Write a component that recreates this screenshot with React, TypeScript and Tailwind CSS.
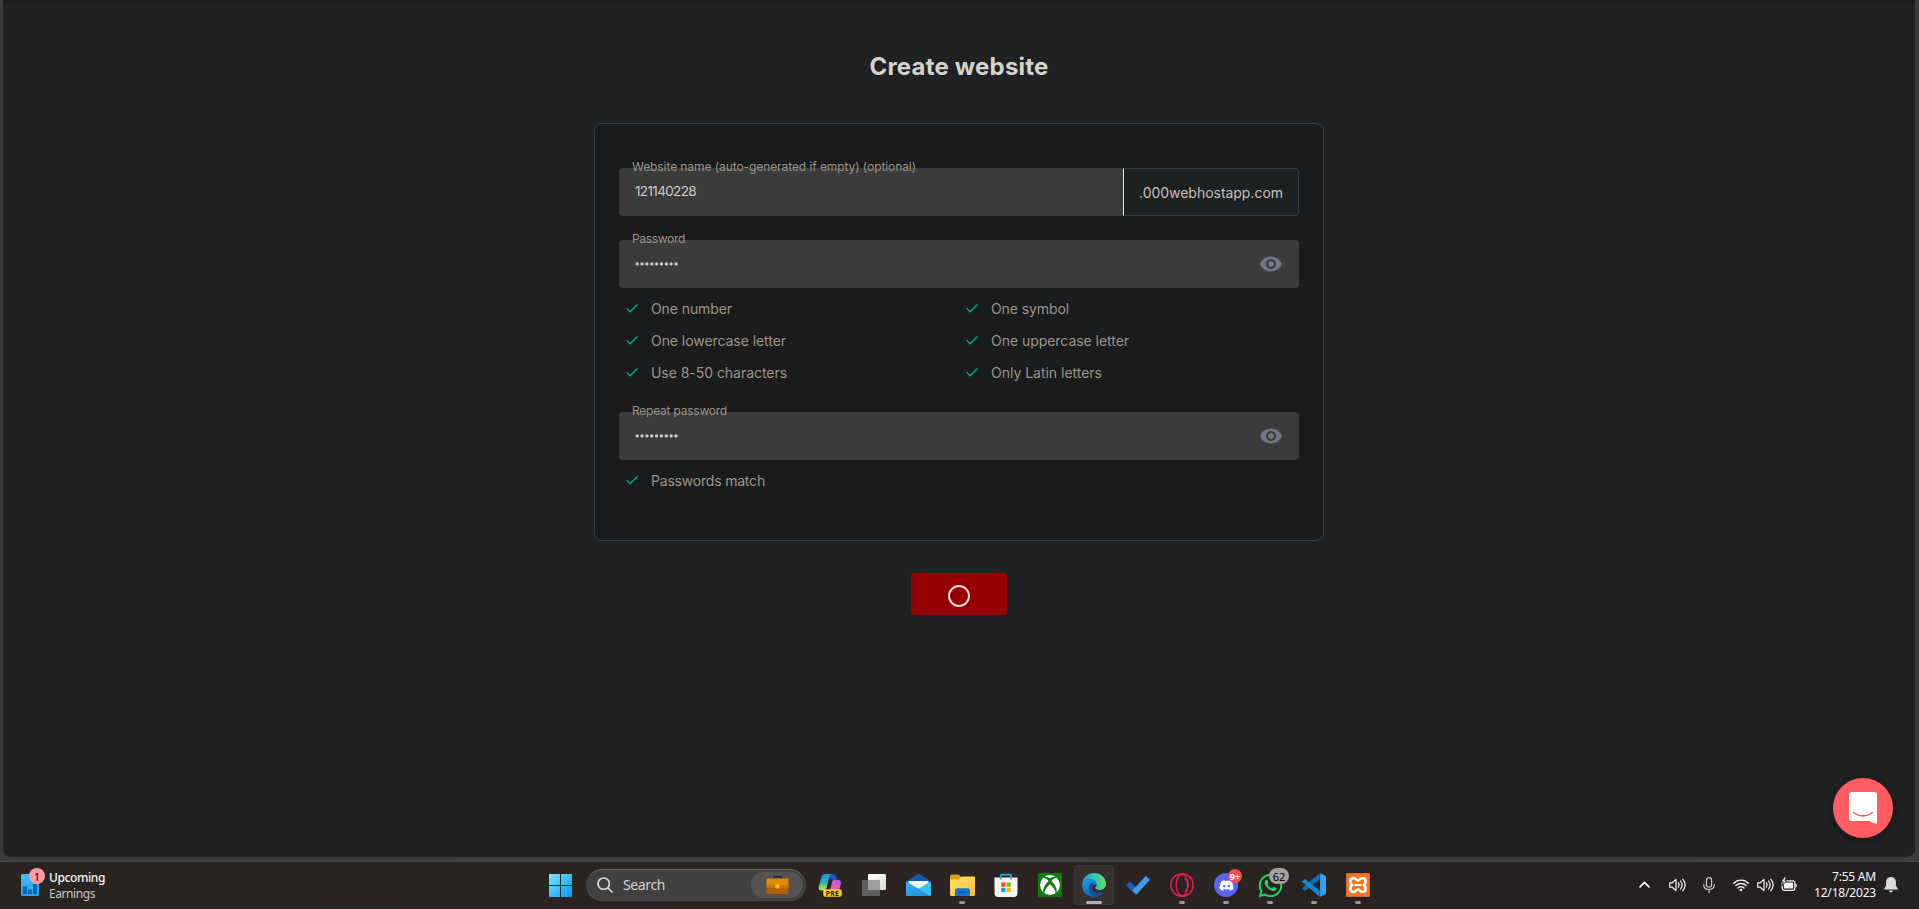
import React from "react";
import { FaDiscord, FaWhatsapp } from "react-icons/fa";

/* Single line of text held to an exact advance width. */
function Label({ text, w, size, className = "" }: { text: string; w: number; size: number; className?: string }) {
  const ref = React.useRef<HTMLSpanElement>(null);
  React.useLayoutEffect(() => {
    const el = ref.current;
    if (!el) return;
    el.style.letterSpacing = "0px";
    const natural = el.getBoundingClientRect().width;
    el.style.letterSpacing = `${(w - natural) / text.length}px`;
  }, [text, w]);
  return (
    <span ref={ref} className={`inline-block whitespace-nowrap leading-none ${className}`} style={{ fontSize: size }}>
      {text}
    </span>
  );
}

function Check() {
  return (
    <svg className="h-3 w-3 shrink-0" viewBox="0 0 12 12" fill="none" stroke="#00a884" strokeWidth="1.4">
      <path d="M.6 6.3 4.1 9.7 11.6 2.3" />
    </svg>
  );
}

function Rule({ text, w }: { text: string; w: number }) {
  return (
    <div className="flex h-8 flex-1 items-center pl-[7px]">
      <Check />
      <Label text={text} w={w} size={14} className="ml-[13px] pt-px text-[#9d9488]" />
    </div>
  );
}

function Eye() {
  return (
    <svg className="mr-4 h-6 w-6" viewBox="0 0 24 24" fill="#727586">
      <path d="M12 4.5C7 4.5 2.73 7.61 1 12c1.73 4.39 6 7.5 11 7.5s9.27-3.11 11-7.5c-1.73-4.39-6-7.5-11-7.5zM12 17c-2.76 0-5-2.24-5-5s2.24-5 5-5 5 2.24 5 5-2.24 5-5 5zm0-8c-1.66 0-3 1.34-3 3s1.34 3 3 3 3-1.34 3-3-1.34-3-3-3z" />
    </svg>
  );
}

function PasswordField({ label, w }: { label: string; w: number }) {
  return (
    <div className="relative flex h-12 items-center justify-between rounded-[4px] bg-[#3b3b3b] pl-4">
      <Label text={label} w={w} size={12} className="absolute left-[13px] top-[-7px] text-[#9d9488]" />
      <svg className="h-1 w-11" viewBox="0 0 44 4" fill="#d0ccc6">
        {Array.from({ length: 9 }, (_, i) => (
          <circle key={i} cx={2.2 + i * 4.85} cy="1.9" r="1.7" />
        ))}
      </svg>
      <Eye />
    </div>
  );
}

function Tile({ children, running, active }: { children: React.ReactNode; running?: boolean; active?: boolean }) {
  return (
    <div className="relative flex h-[46px] w-11 items-center justify-center">
      {active && <div className="absolute inset-x-[2px] top-[3px] h-10 rounded-[4px] border border-white/4 bg-white/6" />}
      <div className="relative flex h-6 w-6 items-center justify-center">{children}</div>
      {running && <div className="absolute bottom-1 h-[3px] w-[6px] rounded-full bg-[#9b9896]" />}
      {active && <div className="absolute bottom-1 h-[3px] w-4 rounded-full bg-[#b3b1b0]" />}
    </div>
  );
}

function Copilot() {
  return (
    <svg className="absolute left-0 top-0 h-6 w-6 overflow-visible" viewBox="0 0 24 24">
      <defs>
        <linearGradient id="cpA" x1="0" y1="0" x2="0" y2="1"><stop stopColor="#1b8fe0" /><stop offset=".5" stopColor="#23b7b0" /><stop offset="1" stopColor="#d5e03a" /></linearGradient>
        <linearGradient id="cpB" x1="1" y1="0" x2="0" y2="1"><stop stopColor="#a35bf2" /><stop offset=".5" stopColor="#e65bb0" /><stop offset="1" stopColor="#ff9d5c" /></linearGradient>
      </defs>
      <path fill="#1d50c8" d="M8 1h7.5c1.5 0 2.3 1 2.7 2.3L19.500 7h-4L12 5z" />
      <path fill="url(#cpA)" d="M7 1h7c-2 1-2.8 3.5-3.6 6.5L8.8 14c-.6 2.300-1.7 3.5-4 3.5H3.3C.8 17.5.2 15.5.8 13L3.6 4C4.2 2 5.2 1 7 1z" />
      <path fill="url(#cpB)" d="M15.500 7h4.3c2.8 0 3.6 2 3 4.5L20.500 19c-.6 2-1.5 3-3.3 3H9c2-1 2.600-3 3.300-5.5l1.4-5.7c.4-2 .8-3.2 1.800-3.800z" />
      <rect x="5.200" y="16.300" width="18.500" height="7.500" rx="2" fill="#fccb12" />
      <text x="14.400" y="22.600" textAnchor="middle" fontSize="6.800" fontWeight="700" letterSpacing=".3" fontFamily="Open Sans, sans-serif" fill="#1c1900">PRE</text>
    </svg>
  );
}

function TaskView() {
  return (
    <svg className="h-6 w-6" viewBox="0 0 24 24">
      <defs><linearGradient id="tv" x1="0" y1="0" x2="1" y2="1"><stop stopColor="#fff" /><stop offset="1" stopColor="#d7d7d7" /></linearGradient></defs>
      <rect x="6" y="1" width="18" height="16" rx="1" fill="url(#tv)" />
      <rect x="0" y="7" width="18" height="16" rx="1" fill="#666" fillOpacity=".9" />
      <path fill="#9f9f9f" d="M6 7h12v10H6z" />
    </svg>
  );
}

function Mail() {
  return (
    <svg className="h-6 w-[25px] shrink-0" viewBox="0 0 25 24">
      <defs><linearGradient id="ml" x1="0" y1="0" x2="1" y2="1"><stop stopColor="#35b5f3" /><stop offset="1" stopColor="#1c86dc" /></linearGradient></defs>
      <path fill="#0f5cab" d="M0 8.500 11.300 1.200a2 2 0 0 1 2.400 0L25 8.500l-3 5H3z" />
      <path fill="#f3f3f3" d="M2.500 8h20v2l-10 7-10-7z" />
      <path fill="#3cc2f6" d="M25 8.500 12.500 15.800 2 23h21.700a1.300 1.300 0 0 0 1.300-1.300z" />
      <path fill="url(#ml)" d="M0 8.500 12.500 15.800 23.900 23H1.300A1.300 1.300 0 0 1 0 21.700z" />
    </svg>
  );
}

function Explorer() {
  return (
    <svg className="h-6 w-[25px] shrink-0" viewBox="0 0 25 24">
      <defs><linearGradient id="ex" x1="0" y1="0" x2="1" y2="1"><stop stopColor="#ffdf75" /><stop offset="1" stopColor="#f9c02c" /></linearGradient></defs>
      <path fill="#dc9c10" d="M0 3.500C0 2.300.7 1.500 2 1.500h6c.8 0 1.300.3 1.800.9L11.500 4.500 8 8H0z" />
      <path fill="url(#ex)" d="M0 6.500h7.500c.7 0 1.200-.2 1.700-.7l1.700-1.700c.4-.4.8-.6 1.400-.6H23.500c1 0 1.500.6 1.500 1.500v16.500c0 .8-.5 1.500-1.500 1.500h-22C.5 23 0 22.300 0 21.500z" />
      <path fill="#1474cc" d="M5 23v-5c0-1.700 1-2.700 2.700-2.700h9.600c1.700 0 2.700 1 2.700 2.700v5z" />
      <rect x="8" y="18.600" width="9" height="1.500" rx=".7" fill="#0c5cab" />
    </svg>
  );
}

function Store() {
  return (
    <svg className="h-6 w-6" viewBox="0 0 24 24">
      <path fill="#f4f4f4" d="M.5 4.500h23v15.800a3.700 3.700 0 0 1-3.700 3.700H4.200A3.700 3.700 0 0 1 .5 20.300z" />
      <path fill="none" stroke="#2ba7ee" strokeWidth="1.700" d="M6.800 6.500V3c0-.9.500-1.400 1.400-1.400h7.600c.9 0 1.400.5 1.400 1.400v3.500" />
      <path fill="#f25022" d="M7.200 9.500h4.300v4.300H7.200z" /><path fill="#7fba00" d="M12.500 9.500h4.300v4.300h-4.300z" />
      <path fill="#00a4ef" d="M7.200 14.800h4.300v4.300H7.200z" /><path fill="#ffb900" d="M12.500 14.800h4.300v4.300h-4.300z" />
    </svg>
  );
}

function Xbox() {
  return (
    <svg className="h-6 w-6" viewBox="0 0 24 24">
      <rect width="24" height="24" rx="1.500" fill="#107c10" />
      <circle cx="12" cy="12" r="9.900" fill="#fff" />
      <path fill="#107c10" d="M12 5.200C10.200 4 8.200 3.300 6.200 3.900L4.900 5.100c2-.4 4 1 5.600 2.800C7.600 10.800 4.700 15.500 5.200 19.200l1 1C6.700 17 9.400 13.300 12 11.200c2.600 2.100 5.300 5.800 5.800 9l1-1c.5-3.700-2.400-8.400-5.300-11.300 1.600-1.800 3.600-3.200 5.600-2.800l-1.300-1.200C15.800 3.300 13.800 4 12 5.200z" />
    </svg>
  );
}

function Edge() {
  return (
    <svg className="h-6 w-6" viewBox="0 0 24 24">
      <defs>
        <linearGradient id="eA" x1="0" y1=".4" x2="1" y2=".4"><stop stopColor="#2aa5e0" /><stop offset=".5" stopColor="#2fc4c6" /><stop offset="1" stopColor="#6be04d" /></linearGradient>
        <linearGradient id="eB" x1="0" y1="0" x2=".5" y2="1"><stop stopColor="#1f9be4" /><stop offset="1" stopColor="#0e62b8" /></linearGradient>
      </defs>
      <path fill="url(#eB)" d="M0 12C.3 8.500 3.800 6.300 7.500 6.300c4.200 0 7.500 2.500 7.500 5.500-3-1-5.300 1-5.300 3.500 0 3.500 4 5.500 8 5.200 2-.1 3.500-.8 4.500-1.200C20 22.500 16.200 24 12 24 5.400 24 0 18.600 0 12z" />
      <path fill="#124f9b" d="M8.800 10.500C7.400 11.800 6.700 13.500 6.800 15.500c.2 4 3.200 7.300 7 8.300 3.300-.4 6.500-2 8.300-4.600-4.500 2.300-12.400.4-12.400-4.400 0-2.200 1.500-3.500 3-3.500-1-.9-2.700-1.200-3.900-.8z" />
      <path fill="url(#eA)" d="M.2 10.500C1.200 4.500 6.200 0 12 0c6.800 0 12 5 12 10.500 0 4-2.700 6.500-6.300 6.500-2.900 0-4.400-1.200-4.400-2.200 0-.7 1.500-1.200 1.500-3.200C14.800 8.400 11 6 7.300 6 4 6 1.500 7.800.2 10.500z" />
    </svg>
  );
}

function Todo() {
  return (
    <svg className="h-6 w-6" viewBox="0 0 24 24">
      <path fill="#195abd" d="M0 12.200 4 8.200l7.700 7.700-4 4z" />
      <path fill="#3f9be8" d="M20 2.700 24 6.700 11 20.900a1 1 0 0 1-1.400 0L6.300 17.600z" />
    </svg>
  );
}

function VSCode() {
  return (
    <svg className="h-6 w-6" viewBox="0 0 24 24">
      <path fill="#0a70b8" d="M17.600.2v6.300L3 18 .5 16.300c-.5-.4-.5-1 0-1.500z" />
      <path fill="#1287d2" d="M17.600 23.800v-6.300L3 6 .5 7.700c-.5.4-.5 1 0 1.500z" />
      <path fill="#2ba3f1" d="M17.500 0 23 2.500c.6.300 1 .8 1 1.400v16.200c0 .6-.4 1.100-1 1.400L17.500 24c.4-.4.600-.8.600-1.300V1.300c0-.5-.2-.9-.6-1.300z" />
    </svg>
  );
}

function Xampp() {
  return (
    <svg className="h-6 w-6" viewBox="0 0 24 24">
      <rect width="24" height="24" rx="1.500" fill="#f37623" />
      <rect x=".5" y=".5" width="23" height="23" rx="1.200" fill="none" stroke="#c96b32" />
      <path fill="none" stroke="#fff" strokeWidth="2.600" strokeLinejoin="round" d="M8.300 5.200H6.800A2.300 2.300 0 0 0 4.500 7.500v1.800c0 1.500 1 2.100 1.800 2.700-.8.600-1.800 1.200-1.800 2.700v1.800a2.300 2.300 0 0 0 2.300 2.300h1.500c1.600 0 1.700-2.300 3.700-2.300s2.100 2.300 3.700 2.300h1.500a2.300 2.300 0 0 0 2.300-2.300v-1.800c0-1.500-1-2.100-1.800-2.700.8-.6 1.800-1.200 1.800-2.700V7.500a2.300 2.300 0 0 0-2.300-2.300h-1.500C14.100 5.200 14 7.500 12 7.500S9.900 5.200 8.300 5.200z" />
      <path stroke="#fff" strokeWidth="2.200" strokeLinecap="round" d="M9.300 12h5.400" />
    </svg>
  );
}

function Speaker() {
  return (
    <svg className="h-4 w-[17px]" viewBox="0 0 17 16" fill="none" stroke="#f2f2f2" strokeWidth="1.200" strokeLinecap="round" strokeLinejoin="round">
      <path d="M.7 5.800v4.400h2.500L7 13.600V2.400L3.200 5.800z" />
      <path d="M9.300 5.800c.9 1.300.9 3.100 0 4.400M11.500 4c1.900 2.400 1.900 5.600 0 8M13.700 2.200c2.900 3.500 2.900 8.100 0 11.600" />
    </svg>
  );
}

function Tray() {
  return (
    <div className="ml-auto flex items-center pr-[21px]">
      <svg className="mr-[19px] h-3 w-[11px]" viewBox="0 0 11 12" fill="none" stroke="#f2f2f2" strokeWidth="1.700" strokeLinecap="round" strokeLinejoin="round">
        <path d="M1 7.800 5.500 3.300 10 7.800" />
      </svg>
      <Speaker />
      <svg className="ml-[17px] h-4 w-3" viewBox="0 0 12 16" fill="none" stroke="#c9c7c6" strokeWidth="1.200" strokeLinecap="round">
        <rect x="3.400" y=".7" width="5.200" height="9.300" rx="2.600" />
        <path d="M.7 7.500C.7 10.700 3 12.500 6 12.500s5.300-1.800 5.300-5M6 12.500v3" />
      </svg>
      <svg className="ml-[18px] h-4 w-4" viewBox="0 0 16 16" fill="none" stroke="#f2f2f2" strokeWidth="1.400" strokeLinecap="round">
        <path d="M.7 6.300c4-4.200 10.600-4.200 14.600 0M2.900 8.600c2.800-2.900 7.400-2.900 10.200 0M5 10.900c1.700-1.700 4.300-1.700 6 0" />
        <circle cx="8" cy="13" r="1.300" fill="#f2f2f2" stroke="none" />
      </svg>
      <div className="ml-2"><Speaker /></div>
      <svg className="ml-[7px] h-4 w-4" viewBox="0 0 16 16">
        <rect x="1.200" y="3.900" width="12.600" height="9.400" rx="2" fill="none" stroke="#f2f2f2" strokeWidth="1.200" />
        <rect x="2.900" y="5.600" width="9.200" height="6" rx=".8" fill="#f2f2f2" />
        <path fill="#f2f2f2" d="M14.500 6.900c.9 0 1.400.4 1.400 1.700s-.5 1.700-1.400 1.700z" />
        <path fill="#fff" stroke="#252220" strokeWidth=".8" d="M3.300 0 .3 4.800h2L1.300 8.700 5.700 3.600H3.800L5.300 0z" />
      </svg>
      <div className="ml-4 flex w-[63px] flex-col items-end gap-1 text-[#f5f5f5]">
        <Label text="7:55 AM" w={44} size={12} />
        <Label text="12/18/2023" w={62} size={12} />
      </div>
      <svg className="ml-2 h-4 w-[14px]" viewBox="0 0 14 16" fill="#dddbda">
        <path d="M7 0c2.900 0 4.900 2.200 4.900 5v3.700l1.800 2.700c.3.500 0 1-.6 1H.9c-.6 0-.9-.5-.6-1l1.800-2.700V5C2.100 2.200 4.100 0 7 0zM4.900 13.400h4.200C9 14.500 8.200 15.300 7 15.300s-2-.8-2.100-1.900z" />
      </svg>
    </div>
  );
}

function Taskbar() {
  return (
    <footer className="mt-1 flex h-12 items-center border-t border-[#4a4847] bg-linear-to-r from-[#2a2420] via-[#2b2422] to-[#232021] pb-px font-['Noto_Sans',sans-serif]">
      <div className="flex w-[549px] items-center pl-[21px]">
        <div className="relative h-[22px] w-[18px]">
          <svg className="h-[22px] w-[18px]" viewBox="0 0 18 22">
            <defs><linearGradient id="wg" x1="0" y1="0" x2="0" y2="1"><stop stopColor="#48bdf3" /><stop offset="1" stopColor="#2a9fe6" /></linearGradient></defs>
            <rect width="18" height="22" rx="1.500" fill="url(#wg)" />
            <path fill="#0a65bc" d="M2 12.500h4V20H2zM7 15.500h4V20H7zM12 10h4v10h-4z" />
          </svg>
          <div className="absolute left-[8px] top-[-6px] flex h-4 w-4 items-center justify-center rounded-full bg-[#ff99a4] text-[11px] leading-none text-black">1</div>
        </div>
        <div className="ml-[10px] flex flex-col items-start gap-1 pt-px">
          <Label text="Upcoming" w={56} size={12} className="font-medium text-[#f5f5f5]" />
          <Label text="Earnings" w={46} size={12} className="text-[#c9c6c4]" />
        </div>
      </div>
      <svg className="h-[23px] w-[23px]" viewBox="0 0 23 23">
        <defs><linearGradient id="wn" gradientUnits="userSpaceOnUse" x1="0" y1="0" x2="23" y2="23"><stop stopColor="#77e7fb" /><stop offset="1" stopColor="#0b93f8" /></linearGradient></defs>
        <path fill="url(#wn)" d="M.5 0H11v11H0V.5zM12 0h10.500l.5.5V11H12zM0 12h11v11H.5l-.5-.5zM12 12h11v10.500l-.5.5H12z" />
      </svg>
      <div className="ml-[14px] flex h-8 w-[220px] items-center rounded-full border border-[#4b4a4a] border-t-[#656463] bg-[#414040] pl-[10px] pr-[2px]">
        <svg className="h-4 w-4" viewBox="0 0 16 16" fill="none" stroke="#dedcdb" strokeWidth="1.700" strokeLinecap="round">
          <circle cx="6.700" cy="6.700" r="5.700" /><path d="m11 11 4 4" />
        </svg>
        <Label text="Search" w={42} size={14} className="ml-[10px] text-[#d3d1d0]" />
        <div className="ml-auto flex h-[26px] w-[52px] items-center justify-center rounded-full bg-[#545352]">
          <svg className="h-[18px] w-[23px]" viewBox="0 0 23 18">
            <path fill="none" stroke="#242424" strokeWidth="1.600" d="M8 3V1.500C8 .9 8.400.8 9 .8h5c.6 0 1 .1 1 .7V3" />
            <path fill="#e58a06" d="M.5 2.500h22V11H.5z" /><path fill="#b65f04" d="M.5 10.500h22V18H.5z" />
            <path fill="#cf7605" d="M.5 9h22v2.500H.5z" /><path fill="#f7c51c" d="M9.500 8.500h4v4h-4z" />
          </svg>
        </div>
      </div>
      <div className="ml-[2px] flex">
        <Tile><Copilot /></Tile>
        <Tile><TaskView /></Tile>
        <Tile><Mail /></Tile>
        <Tile running><Explorer /></Tile>
        <Tile><Store /></Tile>
        <Tile><Xbox /></Tile>
        <Tile active><Edge /></Tile>
        <Tile><Todo /></Tile>
        <Tile running>
          <svg className="h-6 w-6" viewBox="0 0 24 24" fill="none" stroke="#e5204b">
            <circle cx="12" cy="12" r="11.200" strokeWidth="1.500" />
            <ellipse cx="12" cy="12" rx="5.800" ry="10.700" strokeWidth="1.400" />
            <path strokeWidth="1.300" d="M14.500 5.500c5 3 5 10 0 13" />
          </svg>
        </Tile>
        <Tile running>
          <div className="flex h-6 w-6 items-center justify-center rounded-full bg-[#5865f2]"><FaDiscord size={15} color="#fff" /></div>
          <div className="absolute left-[14px] top-[-4px] flex h-[14px] w-[14px] items-center justify-center rounded-full bg-[#f0504f] text-[9px] font-bold leading-none text-white">9+</div>
        </Tile>
        <Tile running>
          <FaWhatsapp size={27} color="#25d366" className="shrink-0" />
          <div className="absolute left-[11px] top-[-5px] flex h-4 w-5 items-center justify-center rounded-full bg-[#a3a1a0] text-[11px] leading-none text-black">62</div>
        </Tile>
        <Tile running><VSCode /></Tile>
        <Tile running><Xampp /></Tile>
      </div>
      <Tray />
    </footer>
  );
}

export default function App() {
  return (
    <div className="flex h-[909px] w-[1919px] flex-col overflow-hidden bg-[#3b3b3b] font-['Inter',sans-serif]">
      <main className="relative ml-[3px] mr-1 flex h-[857px] shrink-0 flex-col items-center rounded-b-[8px] bg-[#202123] pt-[53px]">
        <div className="absolute inset-x-0 top-0 h-[5px] bg-linear-to-b from-[#18191a] to-[#202123]" />
        <h1 className="flex h-7 items-center">
          <Label text="Create website" w={179} size={24} className="font-bold text-[#d6d2cc]" />
        </h1>
        <section className="mt-[42px] h-[418px] w-[730px] rounded-[8px] border border-[#3a3d3f] bg-[#1a1b1d] px-6 pt-11">
          <div className="relative flex h-12">
            <Label text="Website name (auto-generated if empty) (optional)" w={284} size={12} className="absolute left-[13px] top-[-7px] text-[#9d9488]" />
            <div className="flex flex-1 items-center rounded-l-[4px] bg-[#3b3b3b] pb-px pl-4">
              <Label text="121140228" w={61} size={13.5} className="text-[#d0ccc6]" />
            </div>
            <div className="flex w-44 items-center rounded-r-[4px] border border-[#3a3d3f] border-l-[#e8e6e3] bg-[#1e2122] pl-[15px]">
              <Label text=".000webhostapp.com" w={144} size={14} className="pt-px text-[#c4bfb7]" />
            </div>
          </div>
          <div className="mt-6">
            <PasswordField label="Password" w={53} />
          </div>
          <div className="mt-1 flex"><Rule text="One number" w={81} /><Rule text="One symbol" w={78} /></div>
          <div className="flex"><Rule text="One lowercase letter" w={135} /><Rule text="One uppercase letter" w={138} /></div>
          <div className="flex"><Rule text="Use 8-50 characters" w={136} /><Rule text="Only Latin letters" w={111} /></div>
          <div className="mt-6">
            <PasswordField label="Repeat password" w={95} />
          </div>
          <div className="mt-1 flex"><Rule text="Passwords match" w={114} /></div>
        </section>
        <button aria-label="Loading" className="mt-8 flex h-[42px] w-24 items-center justify-center rounded-[4px] bg-[#960004] pt-[3px]">
          <span className="h-[22px] w-[22px] rounded-full border-2 border-[#e9d6d5]" />
        </button>
        <div className="absolute bottom-[19px] right-[22px] flex h-[60px] w-[60px] items-center justify-center rounded-full bg-[#ff5d62] shadow-[0_2px_12px_rgba(0,0,0,.35)]">
          <svg className="h-8 w-7" viewBox="0 0 28 32">
            <path fill="#fff" d="M3 0h22a3 3 0 0 1 3 3v29s-4-.8-7.700-3H3a3 3 0 0 1-3-3V3a3 3 0 0 1 3-3z" />
            <path fill="none" stroke="#ff5d62" strokeWidth="1.600" strokeLinecap="round" d="M4.700 20.500c5 4.500 13.600 4.500 18.600 0" />
          </svg>
        </div>
      </main>
      <Taskbar />
    </div>
  );
}
